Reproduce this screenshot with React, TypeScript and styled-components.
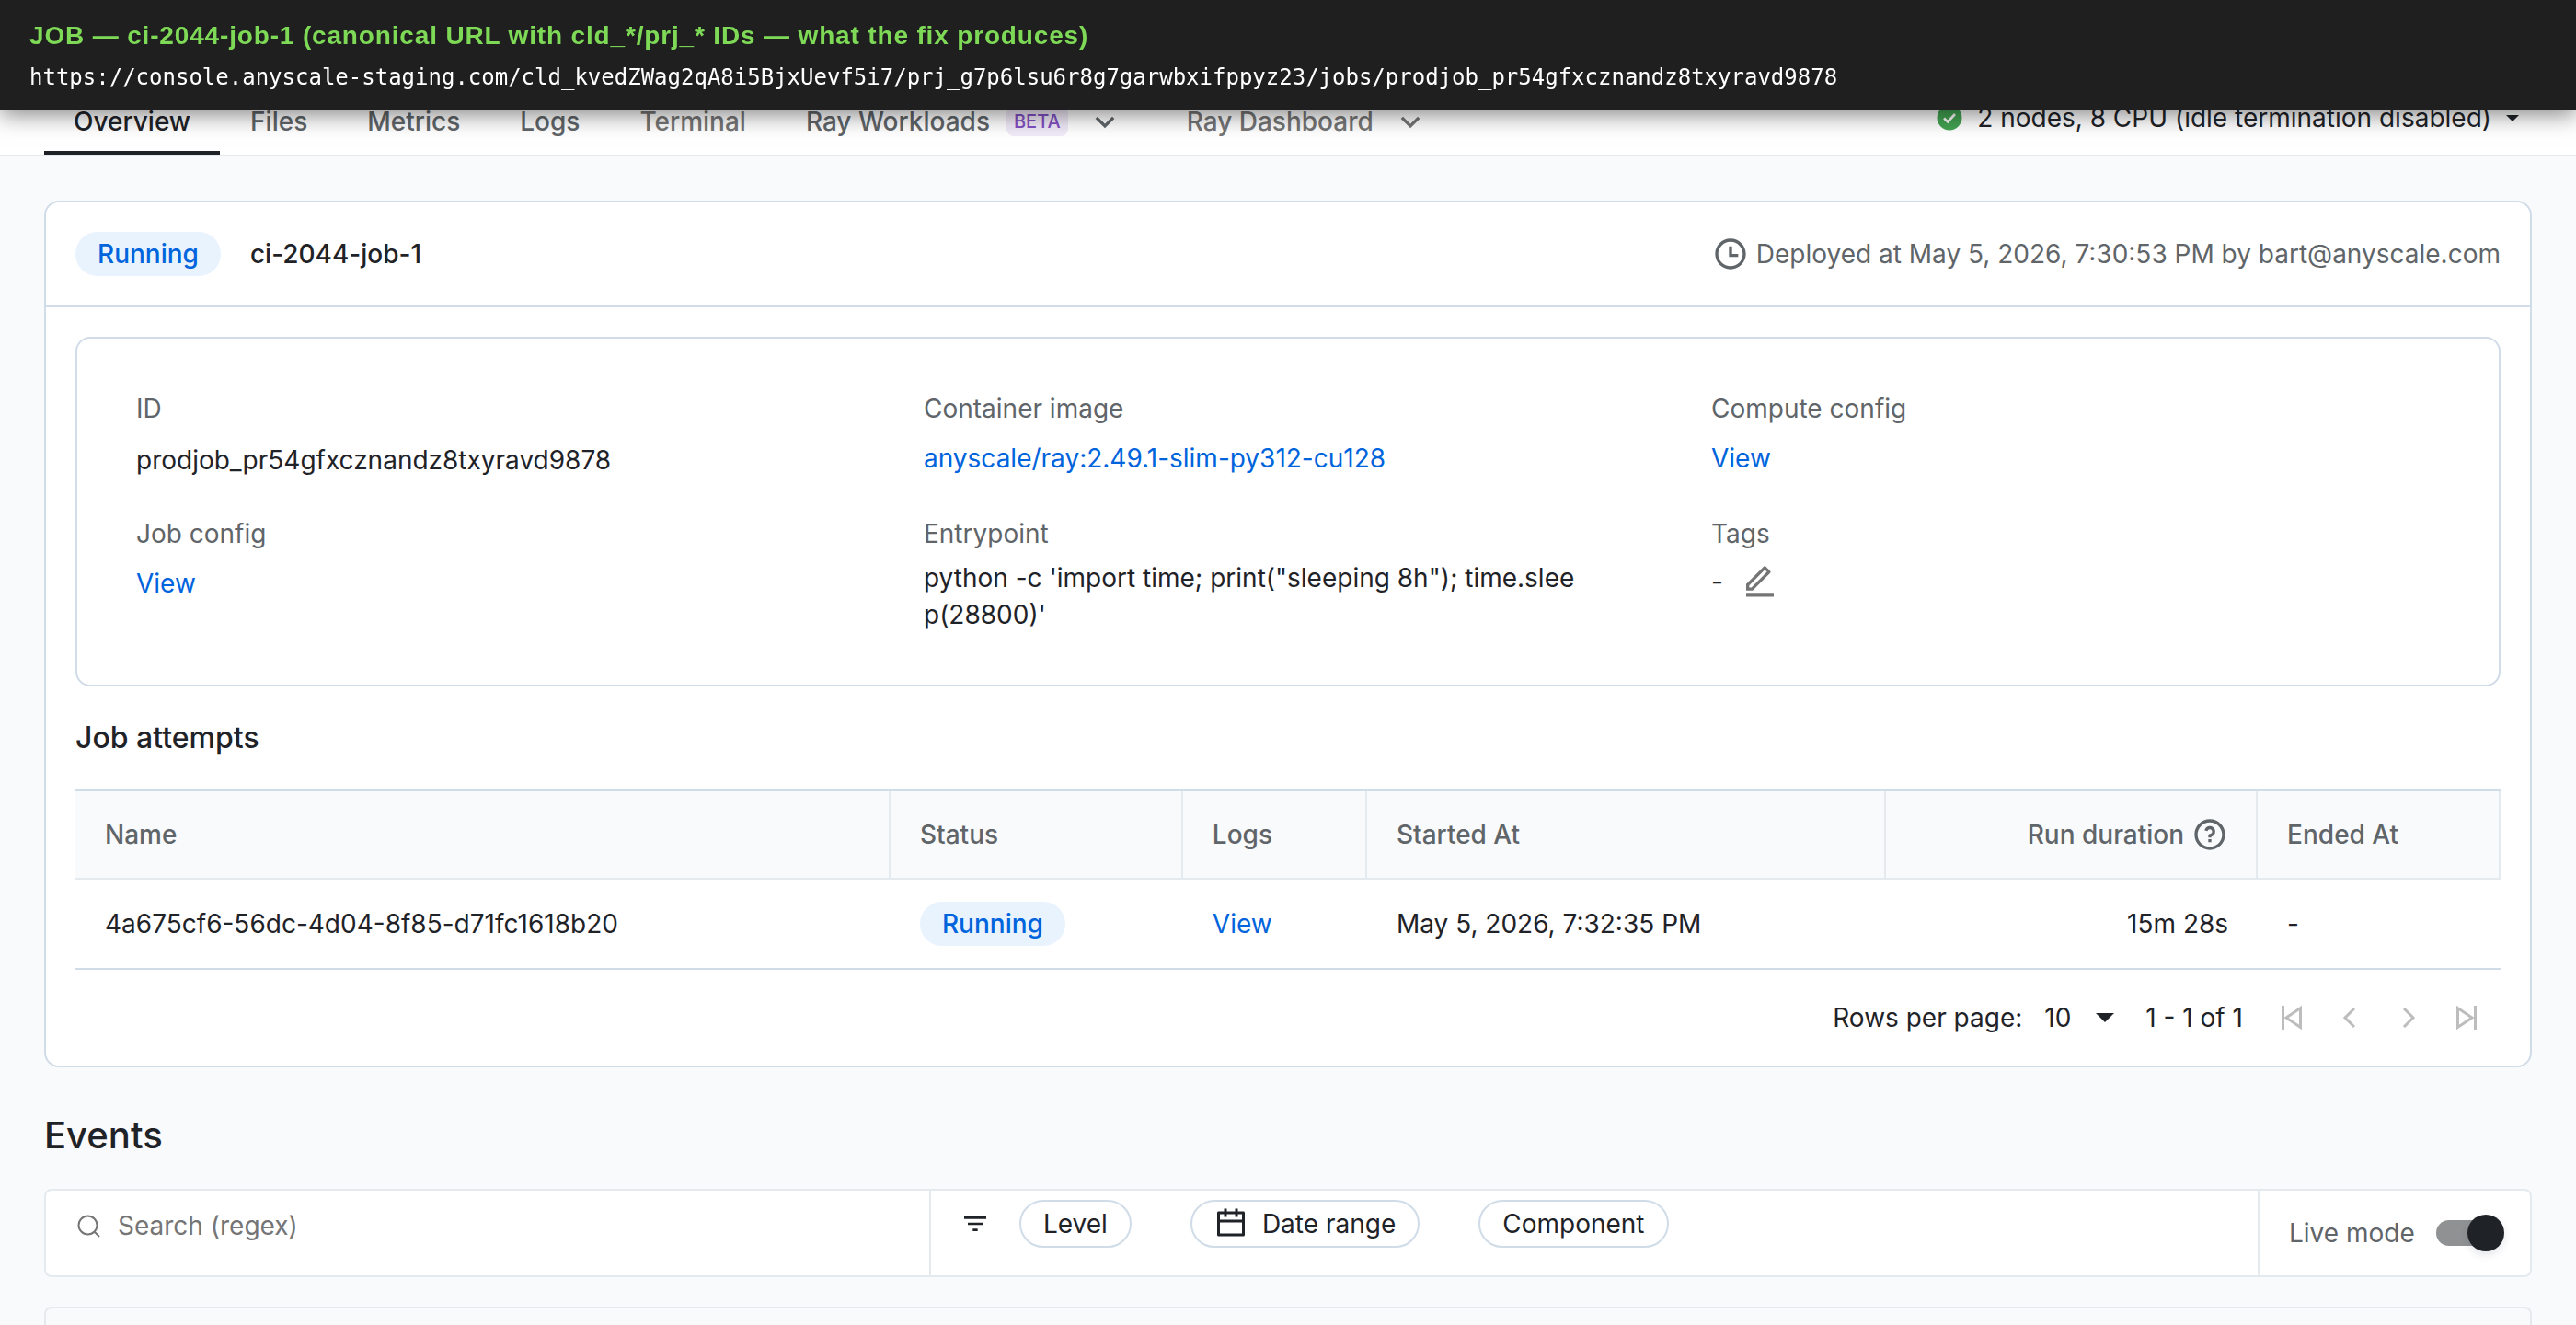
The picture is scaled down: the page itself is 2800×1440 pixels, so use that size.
import React, { useState } from "react";
import styled, { createGlobalStyle } from "styled-components";
import { RiCalendarLine, RiEditLine, RiQuestionLine, RiTimeLine } from "react-icons/ri";
import { MdFilterList } from "react-icons/md";

const color = {
  text: "#1f2328",
  muted: "#5f6569",
  faint: "#757575",
  link: "#0064dc",
  border: "#d0dce8",
  divider: "#e5eaef",
  page: "#f9fafc",
  disabled: "#bdbdbd",
};

const GlobalStyle = createGlobalStyle`
  *, *::before, *::after { box-sizing: border-box; }
  body {
    margin: 0;
    background: ${color.page};
    color: ${color.text};
    font: 400 28px/40px Inter, "Liberation Sans", sans-serif;
  }
  button, input, select { font: inherit; color: inherit; }
  svg { display: block; flex: none; }
`;

const Page = styled.div`
  height: 100vh;
  overflow: hidden;
`;

const Banner = styled.header`
  position: fixed;
  inset: 0 0 auto 0;
  z-index: 10;
  padding: 21px 32px 18px;
  background: #1f1f1f;
  box-shadow: 0 4px 24px rgba(0, 0, 0, 0.5);
`;

const BannerTitle = styled.div`
  color: #7ed957;
  font: 700 28px/36px "Liberation Sans", Arial, sans-serif;
  letter-spacing: 0.03em;
`;

const BannerUrl = styled.div`
  margin-top: 9px;
  color: #fff;
  font: 400 24px/36px "DejaVu Sans Mono", monospace;
`;

const Nav = styled.nav`
  display: flex;
  justify-content: space-between;
  padding: 96px 48px 0;
  background: #fff;
  border-bottom: 2px solid ${color.divider};
`;

const Tabs = styled.div`
  display: flex;
  gap: 1px;
`;

const Tab = styled.a<{ $active?: boolean; $faint?: boolean }>`
  display: flex;
  align-items: center;
  height: 72px;
  padding: 4px 32px 0;
  border-bottom: 4px solid ${(p) => (p.$active ? color.text : "transparent")};
  color: ${(p) => (p.$active ? color.text : p.$faint ? color.faint : color.muted)};
  font-weight: 500;
  text-decoration: none;
`;

const Beta = styled.span`
  margin-left: 18px;
  padding: 0 8px;
  border-radius: 8px;
  background: #f1eaf9;
  color: #8250c4;
  font-size: 20px;
  line-height: 32px;
`;

const TabChevron = styled.svg`
  width: 40px;
  height: 40px;
  margin: 0 4px 0 20px;
`;

const ClusterStatus = styled.button`
  display: flex;
  align-items: center;
  gap: 16px;
  height: 64px;
  padding: 0 14px 0 0;
  border: 0;
  background: none;
`;

const Main = styled.main`
  padding: 48px 48px 0;
`;

const Card = styled.section`
  background: #fff;
  border: 2px solid ${color.border};
  border-radius: 16px;
`;

const CardHeader = styled.div`
  display: flex;
  align-items: center;
  gap: 32px;
  height: 114px;
  padding: 0 32px;
  border-bottom: 2px solid ${color.border};
`;

const Pill = styled.span`
  display: inline-block;
  padding: 4px 24px;
  border-radius: 24px;
  background: #e9f3fe;
  color: ${color.link};
  font-weight: 500;
`;

const JobName = styled.h1`
  margin: 0;
  font-size: 28px;
  font-weight: 500;
`;

const Deployed = styled.div`
  display: flex;
  align-items: center;
  gap: 8px;
  margin-left: auto;
  color: ${color.muted};
`;

const CardBody = styled.div`
  padding: 32px 32px 0;
`;

const InfoGrid = styled.dl`
  display: grid;
  grid-template-columns: repeat(3, 1fr);
  gap: 32px 64px;
  margin: 0;
  padding: 56px 64px;
  border: 2px solid ${color.border};
  border-radius: 16px;
`;

const InfoLabel = styled.dt`
  color: ${color.muted};
`;

const InfoValue = styled.dd<{ $line?: number }>`
  display: flex;
  align-items: center;
  gap: 20px;
  max-width: 720px;
  margin: 8px 0 0;
  line-height: ${(p) => p.$line ?? 40}px;
  word-break: break-all;
`;

const Link = styled.a`
  color: ${color.link};
  text-decoration: none;
`;

const IconButton = styled.button<{ $size?: number }>`
  display: flex;
  align-items: center;
  justify-content: center;
  width: ${(p) => p.$size ?? 40}px;
  height: ${(p) => p.$size ?? 40}px;
  padding: 0;
  border: 0;
  background: none;
  color: ${color.faint};
  &:disabled { color: ${color.disabled}; }
`;

const SectionTitle = styled.h2`
  margin: 0;
  padding: 36px 0;
  font-size: 32px;
  font-weight: 500;
`;

const Table = styled.table`
  width: 100%;
  table-layout: fixed;
  border-collapse: separate;
  border-spacing: 0;
  border-top: 2px solid ${color.border};
  border-bottom: 2px solid ${color.border};
`;

const Th = styled.th<{ $width: number; $right?: boolean }>`
  width: ${(p) => p.$width}%;
  height: 96px;
  padding: 0 30px 0 32px;
  background: ${color.page};
  border-right: 2px solid ${color.divider};
  border-bottom: 2px solid ${color.divider};
  color: ${color.muted};
  font-weight: 500;
  text-align: ${(p) => (p.$right ? "right" : "left")};
`;

const HeadLabel = styled.span`
  display: flex;
  align-items: center;
  justify-content: flex-end;
  gap: 8px;
`;

const Td = styled.td<{ $right?: boolean }>`
  height: 96px;
  padding: 0 32px;
  text-align: ${(p) => (p.$right ? "right" : "left")};
`;

const Pager = styled.div`
  display: flex;
  align-items: center;
  justify-content: flex-end;
  height: 104px;
  padding-right: 4px;
`;

const PageSize = styled.label`
  display: flex;
  align-items: center;
  gap: 24px;
  margin-right: 34px;
`;

const SelectBox = styled.span`
  display: grid;
  align-items: center;
  > * { grid-area: 1 / 1; }
  > svg { justify-self: end; pointer-events: none; }
`;

const Select = styled.select`
  width: 76px;
  padding: 0;
  border: 0;
  background: none;
  appearance: none;
`;

const PagerButtons = styled.div`
  display: flex;
  margin-left: 20px;
`;

const EventsTitle = styled.h2`
  margin: 0;
  padding: 48px 0 32px;
  font-size: 40px;
  font-weight: 500;
  line-height: 52px;
`;

const Toolbar = styled.div`
  display: flex;
  height: 96px;
  background: #fff;
  border: 2px solid ${color.divider};
  border-radius: 8px;
`;

const SearchBox = styled.label`
  display: flex;
  flex: 0 0 962px;
  align-items: center;
  gap: 14px;
  padding: 0 32px 16px;
  border-right: 2px solid ${color.divider};
  color: ${color.faint};
`;

const SearchInput = styled.input`
  flex: 1;
  padding: 0;
  border: 0;
  outline: 0;
  background: none;
  &::placeholder { color: ${color.faint}; opacity: 1; }
`;

const Filters = styled.div`
  display: flex;
  flex: 1;
  align-items: flex-start;
  gap: 64px;
  padding: 10px 32px 0;
`;

const FilterLead = styled.div`
  display: flex;
  align-items: center;
  gap: 32px;
`;

const Chip = styled.button`
  display: flex;
  align-items: center;
  gap: 16px;
  height: 52px;
  padding: 0 24px;
  border: 2px solid ${color.border};
  border-radius: 26px;
  background: none;
`;

const LiveMode = styled.label`
  display: flex;
  flex: 0 0 296px;
  align-items: center;
  justify-content: space-between;
  padding: 0 28px 0 32px;
  border-left: 2px solid ${color.divider};
  color: ${color.muted};
`;

const Switch = styled.input`
  display: flex;
  align-items: center;
  width: 74px;
  height: 28px;
  margin: 0;
  appearance: none;
  background: linear-gradient(#8f9193, #8f9193) left / 68px 28px no-repeat;
  border-radius: 14px;
  &::after {
    content: "";
    width: 40px;
    height: 40px;
    border-radius: 50%;
    background: ${color.text};
    box-shadow: 0 4px 8px rgba(40, 50, 90, 0.12);
  }
  &:checked::after { margin-left: auto; }
`;

const LogPanel = styled.section`
  height: 320px;
  margin-top: 32px;
  border: 2px solid ${color.divider};
  border-radius: 8px;
`;

const Chevron = () => (
  <TabChevron viewBox="0 0 24 24" fill="none" stroke="currentColor" strokeWidth="2" aria-hidden>
    <path d="M6.5 9.5 12 15l5.500-5.500" />
  </TabChevron>
);

const Caret = ({ width }: { width: number }) => (
  <svg width={width} height={width / 2} viewBox="0 0 10 5" fill="currentColor" aria-hidden>
    <path d="M0 0h10L5 5z" />
  </svg>
);

const CheckBadge = () => (
  <svg width="28" height="28" viewBox="0 0 28 28" aria-hidden>
    <circle cx="14" cy="14" r="13.500" fill="#43a452" />
    <path d="M8 14.500 12.200 18.500 20 10" fill="none" stroke="#fff" strokeWidth="2.600" />
  </svg>
);

const SearchIcon = () => (
  <svg width="32" height="32" viewBox="0 0 32 32" fill="none" stroke="currentColor" strokeWidth="2" aria-hidden>
    <circle cx="13.500" cy="15.500" r="10" />
    <path d="m20.500 22.500 5.500 5.500" />
  </svg>
);

const pagerPaths = [
  { label: "First page", d: "M11.500 7v26M30.500 9.500v21L15 20z" },
  { label: "Previous page", d: "M25 10 15 20l10 10" },
  { label: "Next page", d: "m15 10 10 10-10 10" },
  { label: "Last page", d: "M28.500 7v26M9.500 9.500v21L25 20z" },
];

export default function App() {
  const [live, setLive] = useState(true);
  return (
    <Page>
      <GlobalStyle />
      <Banner>
        <BannerTitle>JOB — ci-2044-job-1 (canonical URL with cld_*/prj_* IDs — what the fix produces)</BannerTitle>
        <BannerUrl>
          https://console.anyscale-staging.com/cld_kvedZWag2qA8i5BjxUevf5i7/prj_g7p6lsu6r8g7garwbxifppyz23/jobs/prodjob_pr54gfxcznandz8txyravd9878
        </BannerUrl>
      </Banner>

      <Nav>
        <Tabs>
          <Tab href="#overview" $active>Overview</Tab>
          <Tab href="#files">Files</Tab>
          <Tab href="#metrics">Metrics</Tab>
          <Tab href="#logs">Logs</Tab>
          <Tab href="#terminal" $faint>Terminal</Tab>
          <Tab href="#workloads">
            Ray Workloads<Beta>BETA</Beta><Chevron />
          </Tab>
          <Tab href="#dashboard" $faint>
            Ray Dashboard<Chevron />
          </Tab>
        </Tabs>
        <ClusterStatus type="button">
          <CheckBadge />
          2 nodes, 8 CPU (idle termination disabled)
          <Caret width={14} />
        </ClusterStatus>
      </Nav>

      <Main>
        <Card>
          <CardHeader>
            <Pill>Running</Pill>
            <JobName>ci-2044-job-1</JobName>
            <Deployed>
              <RiTimeLine size={40} />
              Deployed at May 5, 2026, 7:30:53 PM by bart@anyscale.com
            </Deployed>
          </CardHeader>
          <CardBody>
            <InfoGrid>
              <div>
                <InfoLabel>ID</InfoLabel>
                <InfoValue $line={56}>prodjob_pr54gfxcznandz8txyravd9878</InfoValue>
              </div>
              <div>
                <InfoLabel>Container image</InfoLabel>
                <InfoValue $line={52}><Link href="#image">anyscale/ray:2.49.1-slim-py312-cu128</Link></InfoValue>
              </div>
              <div>
                <InfoLabel>Compute config</InfoLabel>
                <InfoValue $line={52}><Link href="#compute">View</Link></InfoValue>
              </div>
              <div>
                <InfoLabel>Job config</InfoLabel>
                <InfoValue $line={52}><Link href="#config">View</Link></InfoValue>
              </div>
              <div>
                <InfoLabel>Entrypoint</InfoLabel>
                <InfoValue>python -c 'import time; print("sleeping 8h"); time.sleep(28800)'</InfoValue>
              </div>
              <div>
                <InfoLabel>Tags</InfoLabel>
                <InfoValue $line={48}>
                  -
                  <IconButton type="button" aria-label="Edit tags"><RiEditLine size={40} /></IconButton>
                </InfoValue>
              </div>
            </InfoGrid>

            <SectionTitle>Job attempts</SectionTitle>
            <Table>
              <thead>
                <tr>
                  <Th $width={33.61}>Name</Th>
                  <Th $width={12.06}>Status</Th>
                  <Th $width={7.59}>Logs</Th>
                  <Th $width={21.4}>Started At</Th>
                  <Th $width={15.33} $right>
                    <HeadLabel>Run duration<RiQuestionLine size={40} /></HeadLabel>
                  </Th>
                  <Th $width={10.01}>Ended At</Th>
                </tr>
              </thead>
              <tbody>
                <tr>
                  <Td>4a675cf6-56dc-4d04-8f85-d71fc1618b20</Td>
                  <Td><Pill>Running</Pill></Td>
                  <Td><Link href="#logs">View</Link></Td>
                  <Td>May 5, 2026, 7:32:35 PM</Td>
                  <Td $right>15m 28s</Td>
                  <Td>-</Td>
                </tr>
              </tbody>
            </Table>
            <Pager>
              <PageSize>
                Rows per page:
                <SelectBox>
                  <Select defaultValue="10">
                    <option>10</option>
                    <option>25</option>
                    <option>50</option>
                  </Select>
                  <Caret width={20} />
                </SelectBox>
              </PageSize>
              1 - 1 of 1
              <PagerButtons>
                {pagerPaths.map(({ label, d }) => (
                  <IconButton key={label} type="button" aria-label={label} disabled $size={64}>
                    <svg width="40" height="40" viewBox="0 0 40 40" fill="none" stroke="currentColor" strokeWidth="3">
                      <path d={d} />
                    </svg>
                  </IconButton>
                ))}
              </PagerButtons>
            </Pager>
          </CardBody>
        </Card>

        <EventsTitle>Events</EventsTitle>
        <Toolbar>
          <SearchBox>
            <SearchIcon />
            <SearchInput type="text" placeholder="Search (regex)" aria-label="Search (regex)" />
          </SearchBox>
          <Filters>
            <FilterLead>
              <MdFilterList size={32} />
              <Chip type="button">Level</Chip>
            </FilterLead>
            <Chip type="button"><RiCalendarLine size={36} />Date range</Chip>
            <Chip type="button">Component</Chip>
          </Filters>
          <LiveMode>
            Live mode
            <Switch type="checkbox" role="switch" checked={live} onChange={(e) => setLive(e.target.checked)} />
          </LiveMode>
        </Toolbar>
        <LogPanel aria-label="Event log" />
      </Main>
    </Page>
  );
}
